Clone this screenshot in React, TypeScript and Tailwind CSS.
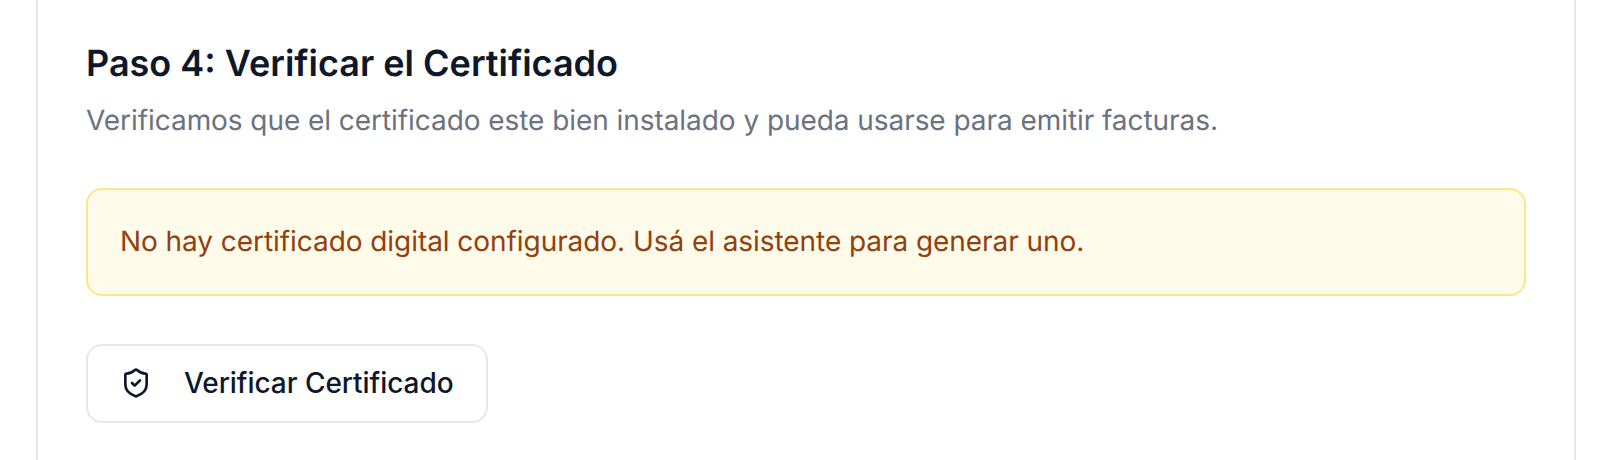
import { ShieldCheck } from 'lucide-react'

export default function App() {
  return (
    <div className="h-[460px] bg-white overflow-hidden font-['Inter',sans-serif] [text-rendering:geometricPrecision]">
      <div className="mx-9 h-[460px] border-x-2 border-[#e2e8f0] px-12 pt-[43px]">
        <h2 className="text-[36px] leading-[40px] font-semibold text-[#0f172a]">Paso 4: Verificar el Certificado</h2>
        <p className="mt-[17px] text-[28px] leading-[40px] tracking-[-0.06px] text-[#6b7280]">
          Verificamos que el certificado este bien instalado y pueda usarse para emitir facturas.
        </p>
        <div className="mt-12 h-[108px] rounded-2xl border-2 border-[#fde68a] bg-[#fffbeb] px-8 pb-[2px] flex items-center text-[28px] tracking-[-0.06px] text-[#92400e]">
          No hay certificado digital configurado. Usá el asistente para generar uno.
        </div>
        <button className="mt-12 h-[79px] rounded-2xl border-2 border-[#e2e8f0] bg-white inline-flex items-center px-8 pb-[2px] gap-8 text-[28px] tracking-[-0.05px] font-medium text-[#0f172a] whitespace-nowrap">
          <ShieldCheck size={32} strokeWidth={2} />
          Verificar Certificado
        </button>
      </div>
    </div>
  )
}
